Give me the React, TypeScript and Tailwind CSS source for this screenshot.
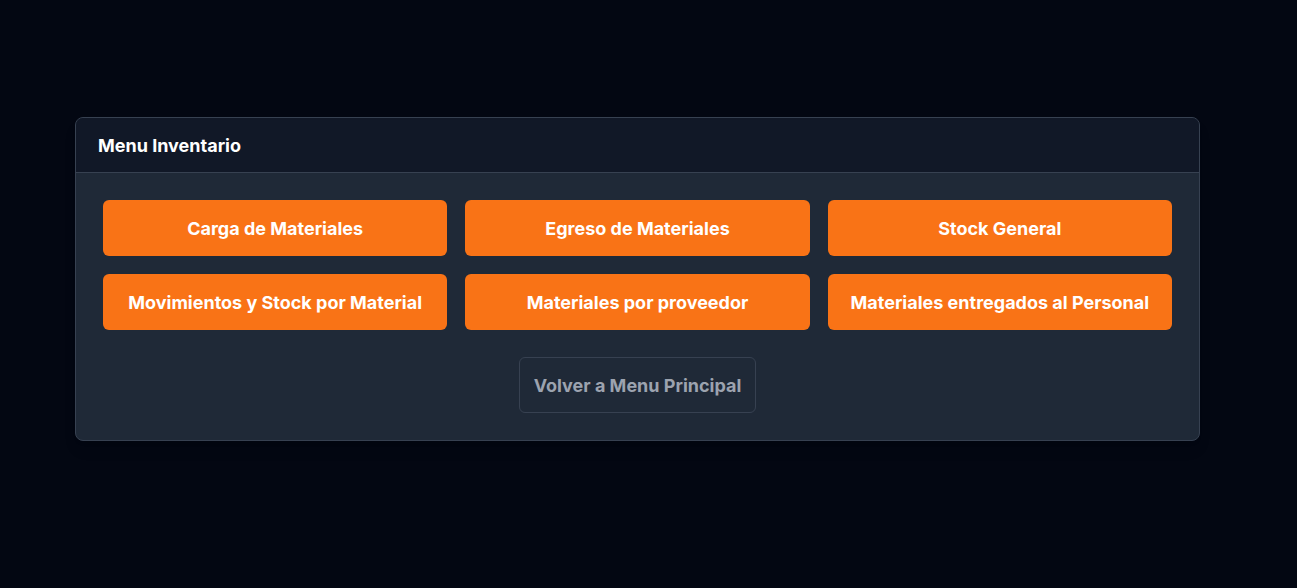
import React from 'react'

const items = [
  'Carga de Materiales',
  'Egreso de Materiales',
  'Stock General',
  'Movimientos y Stock por Material',
  'Materiales por proveedor',
  'Materiales entregados al Personal',
]

export default function App() {
  return (
    <main className="min-h-[588px] bg-[#030712] pt-[117px] pl-[75px] font-['Inter',sans-serif]">
      <div className="w-[1125px] rounded-lg border border-[#374151] bg-[#1f2937] shadow-lg overflow-hidden">
        <div className="h-[55px] flex items-center pt-px px-[22px] bg-[#111827] border-b border-[#374151]">
          <h1 className="text-lg font-bold text-white">Menu Inventario</h1>
        </div>
        <div className="p-[27px]">
          <div className="grid grid-cols-3 gap-[18px]">
            {items.map(t => (
              <button key={t} className="h-[56px] pt-[2px] rounded-md bg-[#f97316] text-white text-lg font-bold">
                {t}
              </button>
            ))}
          </div>
          <div className="flex justify-center mt-[27px]">
            <button className="h-[56px] pt-[2px] px-[14px] rounded-md border border-[#374151] text-[#9ca3af] text-lg font-bold">
              Volver a Menu Principal
            </button>
          </div>
        </div>
      </div>
    </main>
  )
}
